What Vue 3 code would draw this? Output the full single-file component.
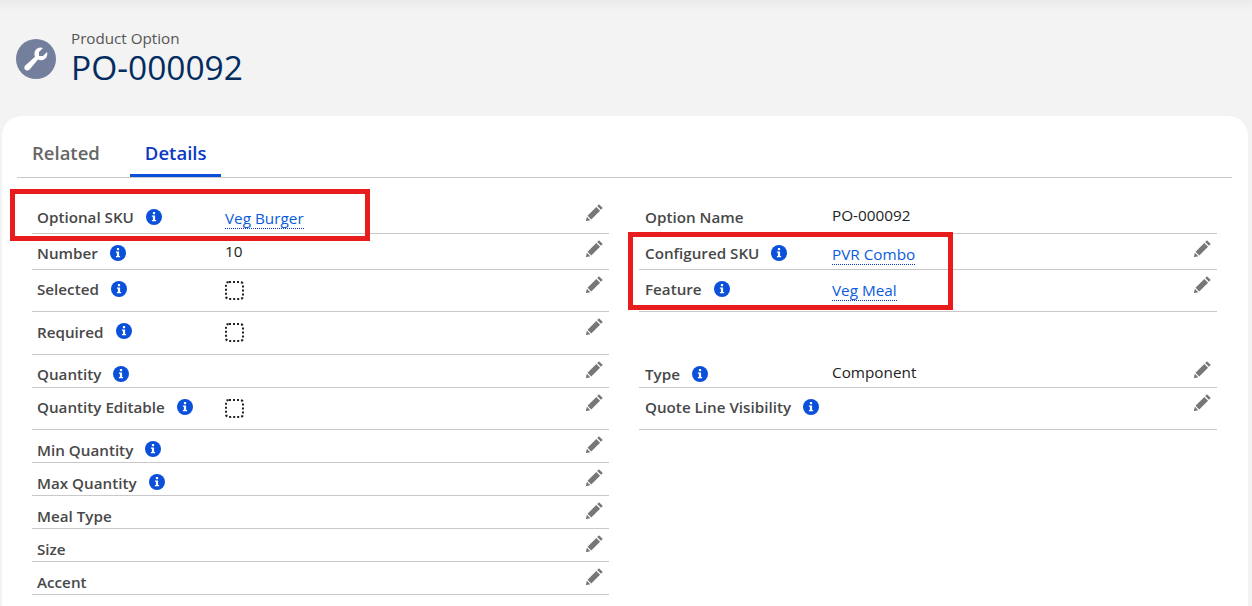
<script setup>
const leftRows = [
	{ label: 'Optional SKU', info: true, link: 'Veg Burger', height: 36 },
	{ label: 'Number', info: true, value: '10', height: 36 },
	{ label: 'Selected', info: true, check: true, height: 42 },
	{ label: 'Required', info: true, check: true, height: 43, low: true },
	{ label: 'Quantity', info: true, height: 33 },
	{ label: 'Quantity Editable', info: true, check: true, height: 42 },
	{ label: 'Min Quantity', info: true, height: 33, low: true },
	{ label: 'Max Quantity', info: true, height: 33, low: true },
	{ label: 'Meal Type', height: 33, low: true },
	{ label: 'Size', height: 33, low: true },
	{ label: 'Accent', height: 33, low: true }
];

const rightRows = [
	{ label: 'Option Name', value: 'PO-000092', height: 36 },
	{ label: 'Configured SKU', info: true, link: 'PVR Combo', height: 36 },
	{ label: 'Feature', info: true, link: 'Veg Meal', height: 42 },
	{ blank: true, height: 43 },
	{ label: 'Type', info: true, value: 'Component', height: 33 },
	{ label: 'Quote Line Visibility', info: true, height: 42 }
];

const columns = [leftRows, rightRows];
</script>

<template>
<div class="page">
	<header class="page-header">
		<div class="object-icon">
			<svg viewBox="0 0 24 24" width="24" height="24">
				<path fill="#fff" d="M18.900 1L15 4.900V8.900L19 9L23 5C24 8.500 22.500 11.500 19.500 12.800C17.500 13.600 15.500 13.400 14 12.600L5.600 22.400C4.400 23.800 2.400 23.900 1.100 22.700C-.1 21.500 0 19.600 1.300 18.400L11 9.800C10.300 8.200 10.200 6 11 4.100C12.500 .9 15.800-.3 18.900 1Z"/>
			</svg>
		</div>
		<div class="title-block">
			<div class="object-name">Product Option</div>
			<h1 class="record-name">PO-000092</h1>
		</div>
	</header>

	<section class="card">
		<nav class="tabs">
			<a class="tab">Related</a>
			<a class="tab active">Details</a>
		</nav>

		<div class="fields">
			<div v-for="(rows, c) in columns" :key="c" class="column">
				<div
					v-for="(row, i) in rows"
					:key="i"
					class="row"
					:class="{ blank: row.blank, low: row.low }"
					:style="{ height: row.height + 'px' }"
				>
					<template v-if="!row.blank">
						<div class="label">
							<span>{{ row.label }}</span>
							<svg v-if="row.info" class="info" viewBox="0 0 16 16" width="16" height="16">
								<circle cx="8" cy="8" r="8" fill="#0b50da"/>
								<rect x="6.900" y="3" width="2.200" height="2.200" fill="#fff"/>
								<path fill="#fff" d="M5.900 6.400h3.200v4.500h1v1.400H5.900v-1.400h1V7.800h-1z"/>
							</svg>
						</div>
						<div class="value">
							<a v-if="row.link" class="link">{{ row.link }}</a>
							<span v-else-if="row.value">{{ row.value }}</span>
							<span v-else-if="row.check" class="check"></span>
						</div>
						<svg v-if="!(c === 1 && i === 0)" class="pencil" viewBox="0 0 18 18" width="17" height="17">
							<path fill="#777" d="M14.300.7l3 3c.3.300.3.700 0 1l-1.500 1.500-4-4L13.300.700c.3-.3.700-.3 1 0zM10.900 3.100l4 4-9.300 9.300-4-4zM.9 13.400l3.700 3.700-4.300 1c-.2 0-.4-.2-.4-.4z"/>
						</svg>
					</template>
				</div>
			</div>
			<div class="highlight highlight-optional"></div>
			<div class="highlight highlight-configured"></div>
		</div>
	</section>
</div>
</template>

<style>
html, body {
	margin: 0;
	background: #f3f3f3;
}
</style>

<style scoped>
.page {
	width: 1252px;
	height: 606px;
	overflow: hidden;
	box-sizing: border-box;
	background: linear-gradient(#ebebeb, #f3f3f3 12px);
	font-family: "Open Sans", "Noto Sans", sans-serif;
	color: #333;
}

.page-header {
	display: flex;
	align-items: flex-start;
	height: 116px;
	box-sizing: border-box;
	padding: 29px 0 0 16px;
}

.object-icon {
	display: flex;
	align-items: center;
	justify-content: center;
	width: 40px;
	height: 40px;
	margin-top: 10px;
	border-radius: 50%;
	background: #737f9c;
}

.title-block {
	margin-left: 15px;
}

.object-name {
	font-size: 15.2px;
	line-height: 19px;
	color: #555;
}

.record-name {
	margin: -1px 0 0;
	font-size: 33.5px;
	font-weight: 400;
	line-height: 40px;
	color: #032d60;
}

.card {
	margin: 0 4px 0 2px;
	height: 490px;
	padding: 0 16px 0 15px;
	border-radius: 20px 20px 0 0;
	background: #fff;
}

.tabs {
	display: flex;
	gap: 30px;
	height: 62px;
	box-sizing: border-box;
	border-bottom: 1px solid #c9c9c9;
}

.tab {
	height: 61px;
	box-sizing: border-box;
	padding: 23px 0 0 15px;
	font-size: 18.5px;
	font-weight: 600;
	line-height: 28px;
	color: #666;
}

.tab.active {
	padding: 23px 15px 0;
	border-bottom: 3px solid #0b50da;
	color: #0b39c4;
}

.fields {
	position: relative;
	display: grid;
	grid-template-columns: 577px 578px;
	column-gap: 30px;
	padding: 20px 0 0 15px;
	width: 1200px;
	box-sizing: border-box;
}

.column {
	display: flex;
	flex-direction: column;
}

.row {
	position: relative;
	display: flex;
	align-items: flex-start;
	box-sizing: border-box;
	padding: 8px 0 0 5px;
	border-bottom: 1px solid #c9c9c9;
	font-size: 15.3px;
	line-height: 20px;
}

.column + .column .row {
	padding-left: 6px;
}

.column + .column .label {
	width: 187px;
}

.row.blank {
	border-bottom: none;
}

.label {
	display: flex;
	align-items: flex-start;
	gap: 12px;
	width: 188px;
	flex: none;
	padding-top: 1px;
	font-size: 15.2px;
	font-weight: 600;
	color: #484848;
}

.row.low .label span {
	margin-top: 1px;
}

.info {
	flex: none;
	margin-top: 2px;
}

.value {
	margin-top: -1px;
	color: #222;
}

.link {
	display: inline-block;
	margin-top: 4px;
	line-height: 19px;
	color: #0b5cdb;
	border-bottom: 1px dotted #0b39c4;
}

.check {
	display: block;
	box-sizing: border-box;
	width: 19px;
	height: 19px;
	margin-top: 4px;
	border: 2px dotted #222;
	border-radius: 4px;
}

.pencil {
	position: absolute;
	right: 6px;
	top: 6px;
}

.highlight {
	position: absolute;
	box-sizing: border-box;
	border: 5px solid #e81c1c;
	pointer-events: none;
}

.highlight-optional {
	left: -7px;
	top: 11px;
	width: 360px;
	height: 52px;
}

.highlight-configured {
	left: 611px;
	top: 54px;
	width: 325px;
	height: 78px;
}
</style>
